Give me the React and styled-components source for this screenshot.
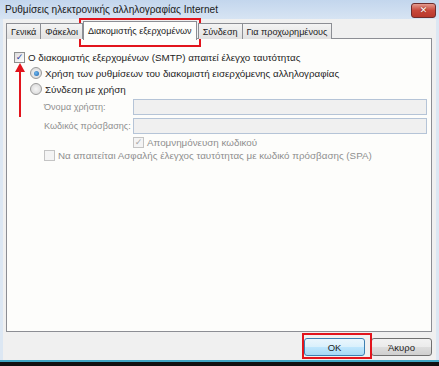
import React from "react";
import styled, { createGlobalStyle, css } from "styled-components";

const Global = createGlobalStyle`
  html, body {
    margin: 0;
    padding: 0;
    background: #111;
  }
  body {
    font-family: "Liberation Sans", Arial, sans-serif;
    font-size: 9.8px;
    color: #1e1e1e;
  }
`;

const Frame = styled.div`
  position: relative;
  width: 439px;
  height: 362px;
  box-sizing: border-box;
  display: flex;
  flex-direction: column;
  background: #dce7f3;
  padding: 0 3px 0 3px;
  border-bottom: 2px solid #3fa6c4;
`;

const TitleBar = styled.div`
  height: 19px;
  margin: 0 -3px;
  padding: 0 3px 0 5px;
  display: flex;
  align-items: center;
  justify-content: space-between;
  background: linear-gradient(#c3d6ed, #d7e4f3);
  font-size: 10.1px;
  color: #1a1a1a;
`;

const Close = styled.div`
  width: 23px;
  height: 13px;
  margin-top: 1px;
  border: 1px solid #6e2d2d;
  border-radius: 3px;
  background: linear-gradient(#e49b8f, #c8473a 50%, #b8382c);
  display: flex;
  align-items: center;
  justify-content: center;
  color: #fff;
  font: bold 9px "DejaVu Sans", sans-serif;
  text-shadow: 0 0 2px #6b1a14;
`;

const Body = styled.div`
  flex: 1;
  background: #f0f0f0;
  display: flex;
  flex-direction: column;
  padding: 2px 4px 0 3px;
`;

const Tabs = styled.div`
  display: flex;
  align-items: flex-end;
  height: 18px;
  position: relative;
  z-index: 1;
  margin-bottom: -1px;
`;

const Tab = styled.div`
  height: 15px;
  box-sizing: content-box;
  padding: 0 4px;
  display: flex;
  align-items: center;
  border: 1px solid #8c8e94;
  border-bottom: none;
  margin-right: -1px;
  background: linear-gradient(#f4f4f4, #e1e1e1);
  color: #222;
  font-size: 9.1px;
  white-space: nowrap;
  ${(p) =>
    p.$active &&
    css`
      height: 17px;
      padding: 0 4px 1px;
      margin: 0 1px -1px 1px;
      background: #fdfdfb;
      position: relative;
      z-index: 2;
    `}
`;

const Panel = styled.div`
  height: 294px;
  box-sizing: border-box;
  background: #fdfdfb;
  border: 1px solid #8c8e94;
  padding: 10px 4px 0 7px;
  display: flex;
  flex-direction: column;
`;

const Row = styled.div`
  display: flex;
  align-items: center;
  height: ${(p) => p.$h || 16}px;
  padding-left: ${(p) => p.$indent || 0}px;
  color: ${(p) => (p.$muted ? "#8f8f8f" : "#1e1e1e")};
  white-space: nowrap;
`;

const Box = styled.span`
  width: 9px;
  height: 9px;
  flex: none;
  margin-right: 3px;
  border: 1px solid ${(p) => (p.$disabled ? "#c4c4c4" : "#8e8f8f")};
  background: ${(p) =>
    p.$disabled ? "#f4f4f4" : "linear-gradient(135deg, #dcdcdc, #fff)"};
  display: flex;
  align-items: center;
  justify-content: center;
  font: bold 9px "DejaVu Sans", sans-serif;
  color: ${(p) => (p.$disabled ? "#a8a8a8" : "#2b3fa0")};
  line-height: 1;
`;

const Radio = styled.span`
  width: 10px;
  height: 10px;
  flex: none;
  margin-right: 3px;
  border-radius: 50%;
  border: 1px solid #9a9a9a;
  background: radial-gradient(circle at 50% 50%, #f6f6f6, #d4d4d4);
  display: flex;
  align-items: center;
  justify-content: center;
  &::after {
    content: "";
    display: ${(p) => (p.$checked ? "block" : "none")};
    width: 5px;
    height: 5px;
    border-radius: 50%;
    background: radial-gradient(circle at 40% 40%, #6fb8ef, #1a5fa8);
  }
`;

const FieldLabel = styled.span`
  width: 89px;
  flex: none;
  color: #8f8f8f;
  font-size: 9.1px;
`;

const Field = styled.div`
  flex: 1;
  height: 14px;
  border: 1px solid #b5c4d7;
  background: #f0f0f0;
`;

const Footer = styled.div`
  display: flex;
  justify-content: flex-end;
  gap: 6px;
  padding: 6px 0 0 0;
`;

const Button = styled.button`
  width: 61px;
  height: 18px;
  padding: 0;
  border-radius: 3px;
  font-family: "Liberation Sans", Arial, sans-serif;
  font-size: 9.5px;
  color: #1e1e1e;
  border: 1px solid ${(p) => (p.$primary ? "#3c7fb1" : "#707070")};
  background: ${(p) =>
    p.$primary
      ? "linear-gradient(#eaf6fd, #d9f0fc 50%, #bee6fd 51%, #a7d9f5)"
      : "linear-gradient(#f2f2f2, #ebebeb 50%, #dddddd 51%, #cfcfcf)"};
`;

const Mark = styled.div`
  position: absolute;
  border: 2px solid #e2141c;
  pointer-events: none;
`;

const Arrow = styled.svg`
  position: absolute;
  left: 15px;
  top: 63px;
`;

export default function App() {
  return (
    <>
      <Global />
      <Frame>
        <TitleBar>
          <span>Ρυθμίσεις ηλεκτρονικής αλληλογραφίας Internet</span>
          <Close>✕</Close>
        </TitleBar>
        <Body>
          <Tabs>
            <Tab>Γενικά</Tab>
            <Tab>Φάκελοι</Tab>
            <Tab $active>Διακομιστής εξερχομένων</Tab>
            <Tab>Σύνδεση</Tab>
            <Tab>Για προχωρημένους</Tab>
          </Tabs>
          <Panel>
            <Row>
              <Box>✓</Box>
              Ο διακομιστής εξερχομένων (SMTP) απαιτεί έλεγχο ταυτότητας
            </Row>
            <Row $indent={16}>
              <Radio $checked />
              Χρήση των ρυθμίσεων του διακομιστή εισερχόμενης αλληλογραφίας
            </Row>
            <Row $indent={16}>
              <Radio />
              Σύνδεση με χρήση
            </Row>
            <Row $indent={30} $h={19}>
              <FieldLabel>Όνομα χρήστη:</FieldLabel>
              <Field />
            </Row>
            <Row $indent={30} $h={19}>
              <FieldLabel>Κωδικός πρόσβασης:</FieldLabel>
              <Field />
            </Row>
            <Row $indent={119} $h={14} $muted>
              <Box $disabled>✓</Box>
              Απομνημόνευση κωδικού
            </Row>
            <Row $indent={30} $h={13} $muted>
              <Box $disabled />
              Να απαιτείται Ασφαλής έλεγχος ταυτότητας με κωδικό πρόσβασης (SPA)
            </Row>
          </Panel>
          <Footer>
            <Button $primary>OK</Button>
            <Button>Άκυρο</Button>
          </Footer>
        </Body>
        <Mark style={{ left: 79, top: 18, width: 118, height: 25 }} />
        <Mark style={{ left: 302, top: 333, width: 66, height: 22 }} />
        <Arrow width="10" height="54" viewBox="0 0 10 54">
          <polygon points="5,0 10,9 0,9" fill="#e2141c" />
          <rect x="4" y="8" width="2" height="46" fill="#e2141c" />
        </Arrow>
      </Frame>
    </>
  );
}
